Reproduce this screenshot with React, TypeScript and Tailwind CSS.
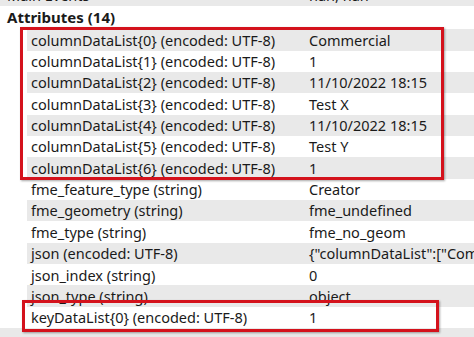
const attributes: [string, string][] = [
  ["columnDataList{0} (encoded: UTF-8)", "Commercial"],
  ["columnDataList{1} (encoded: UTF-8)", "1"],
  ["columnDataList{2} (encoded: UTF-8)", "11/10/2022 18:15"],
  ["columnDataList{3} (encoded: UTF-8)", "Test X"],
  ["columnDataList{4} (encoded: UTF-8)", "11/10/2022 18:15"],
  ["columnDataList{5} (encoded: UTF-8)", "Test Y"],
  ["columnDataList{6} (encoded: UTF-8)", "1"],
  ["fme_feature_type (string)", "Creator"],
  ["fme_geometry (string)", "fme_undefined"],
  ["fme_type (string)", "fme_no_geom"],
  ["json (encoded: UTF-8)", '{"columnDataList":["Commercial","1"]}'],
  ["json_index (string)", "0"],
  ["json_type (string)", "object"],
  ["keyDataList{0} (encoded: UTF-8)", "1"],
];

export default function App() {
  return (
    <div className="relative h-[337px] w-[474px] overflow-hidden bg-white font-['Noto_Sans',sans-serif] text-[14.5px] text-[#1a1a1a]">
      {/* row cut off at the top */}
      <div className="-mt-[15px] flex h-[21.3px] items-center bg-[#e9e9e9] leading-none">
        <span className="w-[309px] shrink-0 pl-[7px]">Main Events</span>
        <span>nan, nan</span>
      </div>

      <div className="flex h-[23px] items-center pl-[7px] text-[15px] font-bold leading-none">Attributes (14)</div>

      <div className="pl-[27px]">
        {attributes.map(([name, value], i) => (
          <div
            key={name}
            className={`flex h-[21.35px] items-center whitespace-nowrap leading-none ${i % 2 === 0 ? "bg-[#e9e9e9]" : "bg-white"}`}
          >
            <span className="w-[282px] shrink-0 pl-[4px]">{name}</span>
            <span>{value}</span>
          </div>
        ))}
      </div>

      <div className="flex h-[21.3px] items-center bg-[#e9e9e9] pl-[9px]">
        <svg width="10" height="10" viewBox="0 0 10 10" className="mt-[6px]">
          <path d="M1 9 L1 4 L6 1 L9 3 L4 6 Z" fill="#2f4a5e" />
        </svg>
      </div>

      {/* annotation boxes */}
      <div className="pointer-events-none absolute left-[20px] top-[27px] h-[153px] w-[424px] border-[3px] border-[#d4121c] shadow-[1px_1px_2px_rgba(0,0,0,0.35)]" />
      <div className="pointer-events-none absolute left-[22px] top-[300px] h-[32px] w-[417px] border-[3px] border-[#d4121c] shadow-[1px_1px_2px_rgba(0,0,0,0.35)]" />
    </div>
  );
}
